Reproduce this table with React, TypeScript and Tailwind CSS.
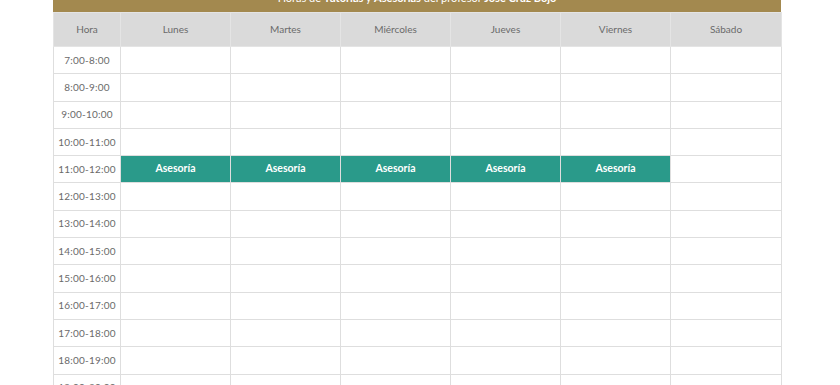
import React from 'react';

const days = ['Lunes', 'Martes', 'Miércoles', 'Jueves', 'Viernes', 'Sábado'];
const hours = [
  '7:00-8:00',
  '8:00-9:00',
  '9:00-10:00',
  '10:00-11:00',
  '11:00-12:00',
  '12:00-13:00',
  '13:00-14:00',
  '14:00-15:00',
  '15:00-16:00',
  '16:00-17:00',
  '17:00-18:00',
  '18:00-19:00',
  '19:00-20:00',
];

export default function App() {
  return (
    <div className="w-[840px] h-[385px] overflow-hidden bg-white font-['Lato','Noto_Sans',sans-serif]">
      <div className="ml-[53px] w-[728px] -mt-[18px]">
        {/* Cabecera */}
        <div className="h-[30px] bg-[#a3894f] flex items-end justify-center pb-[9px] text-[11px] text-white leading-none">
          <span>
            Horas de <b>Tutorías</b> y <b>Asesorías</b> del profesor <b>Jose Cruz Bojo</b>
          </span>
        </div>

        {/* Horario */}
        <table className="w-full border-collapse table-fixed text-[10px] text-[#6a6a6a]">
          <colgroup>
            <col className="w-[67px]" />
            <col className="w-[110px]" />
            <col className="w-[110px]" />
            <col className="w-[110px]" />
            <col className="w-[110px]" />
            <col className="w-[110px]" />
            <col className="w-[111px]" />
          </colgroup>
          <thead>
            <tr className="h-[34px] bg-[#dadada]">
              <th className="font-normal border border-[#e4e4e4]">Hora</th>
              {days.map((d) => (
                <th key={d} className="font-normal border border-[#e4e4e4]">
                  {d}
                </th>
              ))}
            </tr>
          </thead>
          <tbody>
            {hours.map((h) => {
              const isAsesoria = h === '11:00-12:00';
              return (
                <tr key={h} className="h-[27.3px]">
                  <td className="text-center border border-[#dedede] p-0 tracking-[0.2px]">{h}</td>
                  {days.map((d, i) =>
                    isAsesoria && i < 5 ? (
                      <td
                        key={d}
                        className="bg-[#2a9a8a] border border-[#dedede] text-white font-bold text-center p-0 text-[10.5px]"
                      >
                        Asesoría
                      </td>
                    ) : (
                      <td key={d} className="border border-[#dedede] p-0" />
                    )
                  )}
                </tr>
              );
            })}
          </tbody>
        </table>
      </div>
    </div>
  );
}
